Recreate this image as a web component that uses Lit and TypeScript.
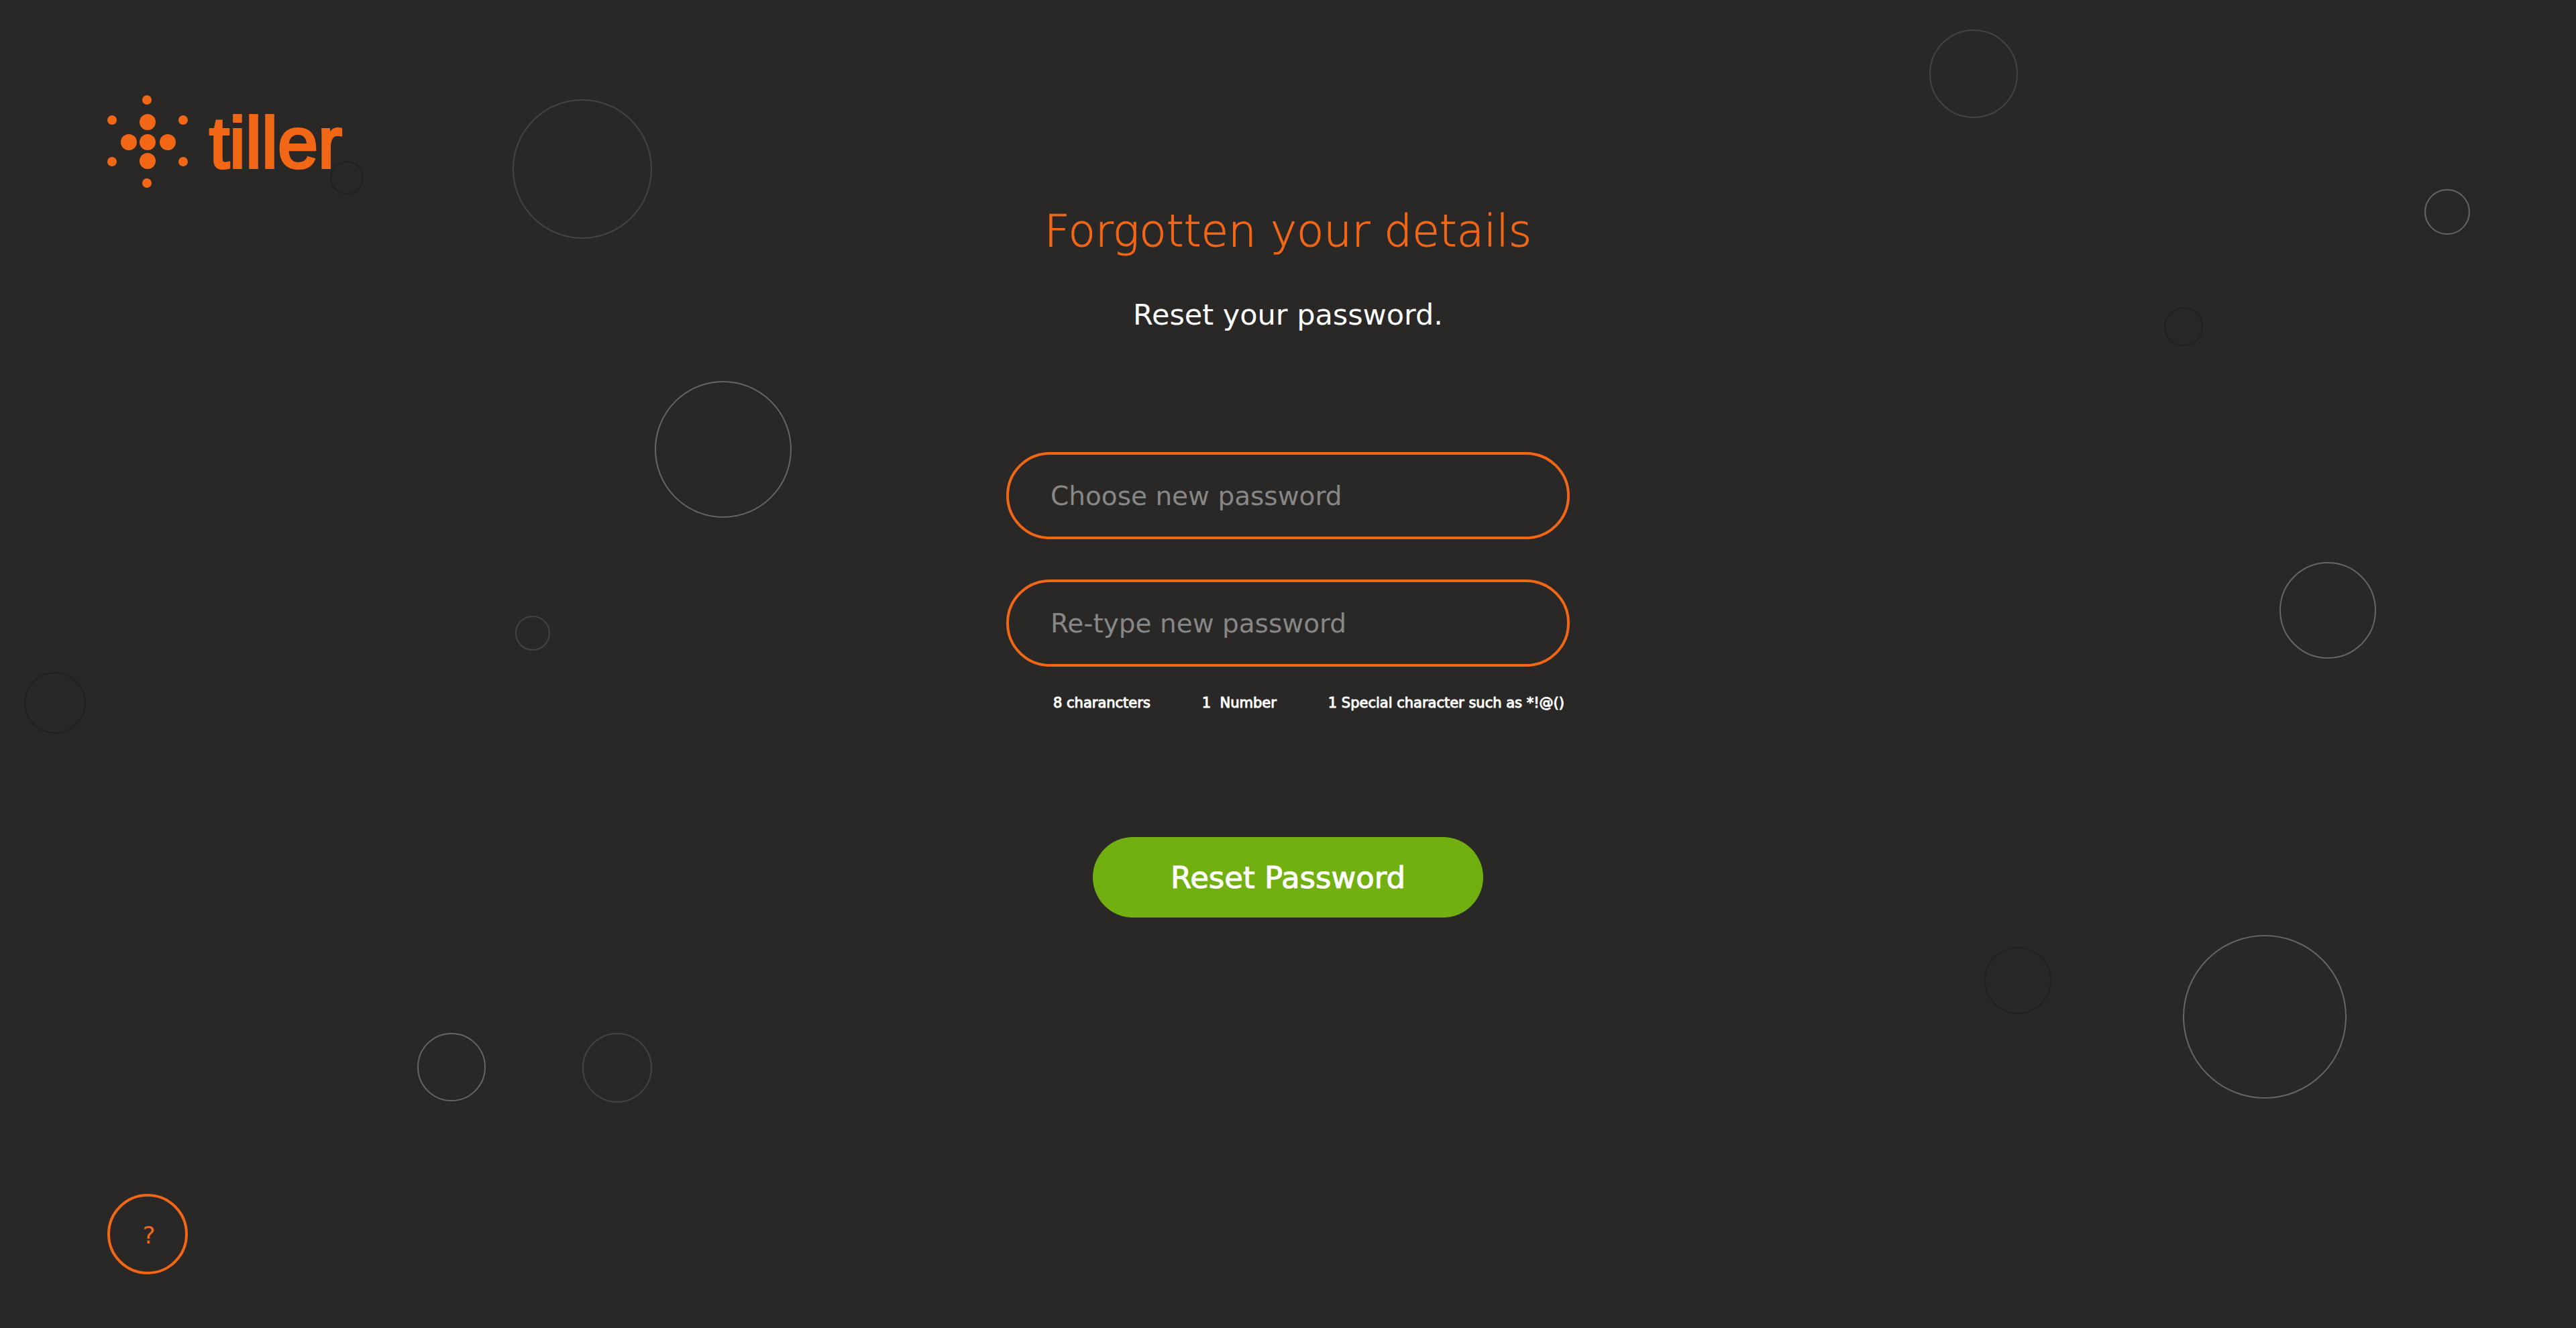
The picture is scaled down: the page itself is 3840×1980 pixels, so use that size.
import { LitElement, html, css, svg } from "lit";
import { customElement } from "lit/decorators.js";

type Tone = "bright" | "dim" | "dark";
interface Bubble { x: number; y: number; d: number; tone: Tone }

const BUBBLES: Bubble[] = [
  { x: 868, y: 252, d: 208, tone: "dim" },
  { x: 1078, y: 670, d: 204, tone: "bright" },
  { x: 794, y: 944, d: 52, tone: "dim" },
  { x: 82, y: 1048, d: 92, tone: "dark" },
  { x: 517, y: 265, d: 50, tone: "dark" },
  { x: 673, y: 1591, d: 102, tone: "bright" },
  { x: 920, y: 1592, d: 104, tone: "dim" },
  { x: 2942, y: 110, d: 132, tone: "dim" },
  { x: 3648, y: 316, d: 68, tone: "bright" },
  { x: 3255, y: 487, d: 58, tone: "dark" },
  { x: 3470, y: 910, d: 144, tone: "bright" },
  { x: 3376, y: 1516, d: 244, tone: "bright" },
  { x: 3008, y: 1462, d: 100, tone: "dark" },
];

const SATELLITES = [[59, 7], [7, 37], [113, 37], [7, 99], [113, 99], [59, 131]];
const CORE = [[60, 40], [32, 70], [60, 70], [90, 70], [60, 98]];

@customElement("tiller-bubbles")
export class TillerBubbles extends LitElement {
  static styles = css`
    :host { display: block; }
    .canvas { display: block; width: 100%; height: 100%; }
    .bubble { fill: none; stroke-width: 2; }
    .bright { stroke: #666664; }
    .dim { stroke: #444442; }
    .dark { stroke: #20201e; }
  `;
  render() {
    return html`
      <svg class="canvas" viewBox="0 0 3840 1980" preserveAspectRatio="xMidYMid slice" aria-hidden="true">
        ${BUBBLES.map((b) => svg`<circle class="bubble ${b.tone}" cx=${b.x} cy=${b.y} r=${b.d / 2 - 1}></circle>`)}
      </svg>
    `;
  }
}

@customElement("tiller-logo")
export class TillerLogo extends LitElement {
  static styles = css`
    :host { display: block; }
    .logo { display: flex; align-items: center; gap: 32px; color: #f26716; text-decoration: none; }
    .mark { display: block; width: 120px; height: 138px; fill: currentColor; }
    .word {
      padding-top: 4px;
      font: 400 108px/120px "Liberation Sans", Arial, sans-serif;
      -webkit-text-stroke: 4px currentColor;
    }
  `;
  render() {
    return html`
      <a class="logo" href="#">
        <svg class="mark" viewBox="0 0 120 138" aria-hidden="true">
          ${SATELLITES.map(([x, y]) => svg`<circle cx=${x} cy=${y} r="7"></circle>`)}
          ${CORE.map(([x, y]) => svg`<circle cx=${x} cy=${y} r="12"></circle>`)}
        </svg>
        <span class="word">tiller</span>
      </a>
    `;
  }
}

@customElement("reset-form")
export class ResetForm extends LitElement {
  static styles = css`
    :host { display: block; }
    * { box-sizing: border-box; }
    .form { display: flex; flex-direction: column; align-items: center; }
    .title {
      margin: 0 0 56px;
      font-size: 66px; line-height: 80px; font-weight: 200;
      color: #f26716;
      -webkit-text-stroke: 1px currentColor;
    }
    .lead { margin: 0 0 177px; font-size: 43px; line-height: 56px; color: #fff; }
    .fields { display: flex; flex-direction: column; gap: 60px; width: 840px; max-width: 100%; }
    .input {
      display: block; width: 100%; height: 130px; padding: 0 62px;
      border: 4px solid #f26716; border-radius: 65px; outline: none;
      background: transparent; color: #fff;
      font-family: inherit; font-size: 39px;
    }
    .input::placeholder { color: #878787; opacity: 1; }
    .rules {
      display: flex; flex-wrap: wrap; justify-content: space-between;
      width: 840px; max-width: 100%; margin: 40px 0 186px; padding: 0 8px 0 70px; list-style: none;
      font-size: 21px; line-height: 28px; color: #fff; white-space: pre;
      -webkit-text-stroke: 1px currentColor;
    }
    .submit {
      width: 582px; max-width: 100%; height: 120px; border: 0; border-radius: 60px;
      background: #72b012; color: #fff; cursor: pointer;
      font-family: inherit; font-size: 45px;
      -webkit-text-stroke: 1px currentColor;
    }
  `;
  private submit(e: Event) {
    e.preventDefault();
  }
  private field(id: string, text: string) {
    return html`<input class="input" id=${id} type="password" placeholder=${text} aria-label=${text} autocomplete="new-password" />`;
  }
  render() {
    return html`
      <form class="form" @submit=${this.submit}>
        <h1 class="title">Forgotten your details</h1>
        <p class="lead">Reset your password.</p>
        <div class="fields">
          ${this.field("new-password", "Choose new password")}
          ${this.field("repeat-password", "Re-type new password")}
        </div>
        <ul class="rules"><li>8 charancters</li><li>1  Number</li><li>1 Special character such as *!@()</li></ul>
        <button class="submit" type="submit">Reset Password</button>
      </form>
    `;
  }
}

@customElement("app-root")
export class AppRoot extends LitElement {
  static styles = css`
    :host {
      display: block;
      background: #292826;
      font-family: "DejaVu Sans", Verdana, sans-serif;
    }
    * { box-sizing: border-box; }
    .page {
      position: relative; display: flex; flex-direction: column;
      min-height: 100vh; padding: 142px 160px 80px;
    }
    .backdrop { position: absolute; inset: 0; pointer-events: none; }
    .header { display: flex; margin-bottom: 25px; }
    .footer { display: flex; margin-top: auto; padding-top: 80px; }
    .help {
      width: 120px; height: 120px; padding: 2px 0 0 4px;
      border: 4px solid #f26716; border-radius: 50%;
      background: transparent; color: #f26716; cursor: pointer;
      font-family: inherit; font-size: 36px;
    }
  `;
  render() {
    return html`
      <div class="page">
        <tiller-bubbles class="backdrop"></tiller-bubbles>
        <header class="header"><tiller-logo></tiller-logo></header>
        <main><reset-form></reset-form></main>
        <footer class="footer"><button class="help" type="button" aria-label="Help">?</button></footer>
      </div>
    `;
  }
}
